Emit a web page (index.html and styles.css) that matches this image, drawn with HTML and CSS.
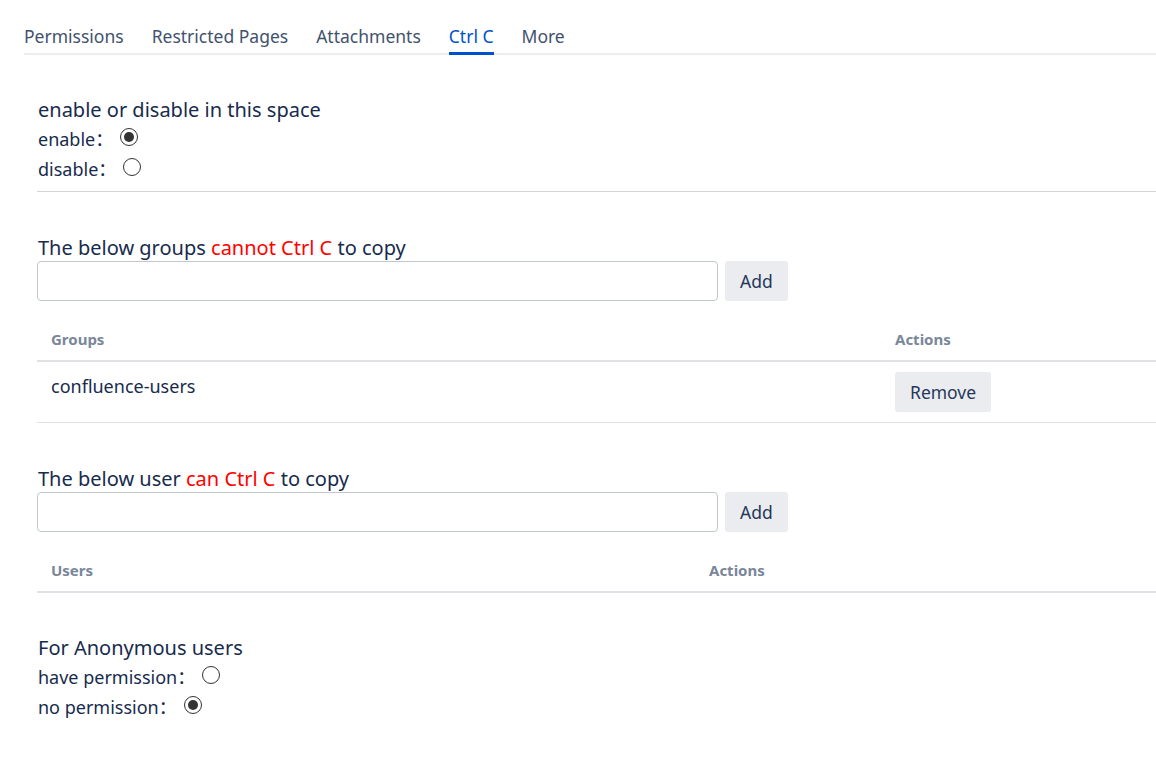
FILE: index.html
```html
<!DOCTYPE html>
<html lang="en">
<head>
<meta charset="utf-8">
<title>Ctrl C settings</title>
<link rel="stylesheet" href="styles.css">
</head>
<body>
<div class="page">
  <nav class="tabs">
    <a class="tab">Permissions</a>
    <a class="tab">Restricted Pages</a>
    <a class="tab">Attachments</a>
    <a class="tab active">Ctrl C</a>
    <a class="tab">More</a>
  </nav>

  <main class="content">
    <section class="block">
      <h2 class="heading">enable or disable in this space</h2>
      <label class="opt">enable：<input type="radio" name="en" class="radio" checked></label>
      <label class="opt">disable：<input type="radio" name="en" class="radio"></label>
    </section>
    <hr class="rule">

    <section class="block group-block">
      <h2 class="heading tight">The below groups <span class="red">cannot Ctrl C</span> to copy</h2>
      <div class="add-row">
        <input class="field" type="text">
        <button class="btn">Add</button>
      </div>
      <table class="grid groups">
        <thead>
          <tr><th class="c1">Groups</th><th>Actions</th></tr>
        </thead>
        <tbody>
          <tr><td class="name">confluence-users</td><td class="act"><button class="btn">Remove</button></td></tr>
        </tbody>
      </table>
    </section>

    <section class="block group-block">
      <h2 class="heading tight">The below user <span class="red">can Ctrl C</span> to copy</h2>
      <div class="add-row">
        <input class="field" type="text">
        <button class="btn">Add</button>
      </div>
      <table class="grid users">
        <thead>
          <tr><th class="c1">Users</th><th>Actions</th></tr>
        </thead>
      </table>
    </section>

    <section class="block anon">
      <h2 class="heading">For Anonymous users</h2>
      <label class="opt">have permission：<input type="radio" name="an" class="radio"></label>
      <label class="opt">no permission：<input type="radio" name="an" class="radio" checked></label>
    </section>
  </main>
</div>
</body>
</html>
```

FILE: styles.css
```css
html, body {
  margin: 0;
  padding: 0;
  background: #ffffff;
}
body {
  font-family: "Noto Sans", "Open Sans", "Noto Sans CJK SC", sans-serif;
  color: #172b4d;
}
.page {
  padding: 24px 0 40px 24px;
}
.tabs {
  display: flex;
  gap: 28px;
  border-bottom: 2px solid #ebecf0;
}
.tab {
  font-size: 17.5px;
  line-height: 24px;
  color: #42526e;
  padding-bottom: 4px;
  border-bottom: 3px solid transparent;
  margin-bottom: -2px;
  cursor: pointer;
}
.tab.active {
  color: #0052cc;
  border-bottom-color: #0052cc;
}
.content {
  padding-left: 13px;
}
.block {
  display: flex;
  flex-direction: column;
  align-items: flex-start;
}
.heading {
  margin: 41px 0 0 0;
  font-size: 20px;
  font-weight: 400;
  line-height: 28px;
  padding-left: 1px;
}
.heading.tight {
  margin-top: 43px;
  line-height: 26px;
}
.red {
  color: #ff0000;
}
.opt {
  font-size: 18px;
  line-height: 30px;
  display: flex;
  align-items: center;
  padding-left: 1px;
}
.radio {
  appearance: none;
  -webkit-appearance: none;
  width: 18px;
  height: 18px;
  margin: 0 0 5px 7px;
  border: 1.3px solid #333;
  border-radius: 50%;
  box-sizing: border-box;
  display: inline-grid;
  place-content: center;
  background: #fff;
}
.radio:checked::before {
  content: "";
  width: 10px;
  height: 10px;
  border-radius: 50%;
  background: #333;
}
.rule {
  margin: 7px 0 0 0;
  border: 0;
  border-top: 1px solid #d4d4d4;
  width: 100%;
}
.add-row {
  display: flex;
  gap: 7px;
}
.field {
  width: 681px;
  height: 40px;
  box-sizing: border-box;
  border: 1px solid #c1c7d0;
  border-radius: 4px;
  margin: 0;
  font: inherit;
}
.btn {
  height: 40px;
  box-sizing: border-box;
  padding: 0 15px;
  border: 0;
  border-radius: 3px;
  background: #ebecf0;
  color: #253858;
  font-family: inherit;
  font-size: 17.5px;
}
.grid {
  width: 100%;
  margin-top: 18px;
  border-collapse: collapse;
}
.grid th {
  text-align: left;
  font-size: 15px;
  font-weight: 700;
  color: #7a869a;
  height: 42px;
  padding: 0 14px 2px;
  border-bottom: 2px solid #dfe1e6;
  box-sizing: border-box;
}
.groups .c1 {
  width: 844px;
}
.users .c1 {
  width: 658px;
}
.grid td {
  border-bottom: 1px solid #dfe1e6;
  padding: 10px 14px;
  vertical-align: top;
}
.grid td.name {
  font-size: 18px;
  line-height: 24px;
  padding-top: 12px;
}
.anon .heading {
  margin-top: 41px;
}
```
